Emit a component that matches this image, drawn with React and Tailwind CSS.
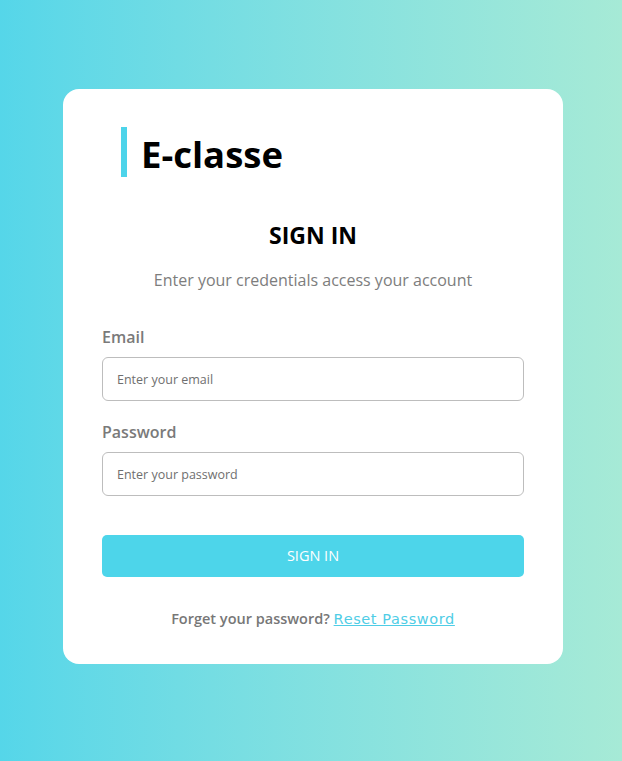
import React, { useState } from 'react';

export default function App() {
  const [form, setForm] = useState({ email: '', password: '' });

  return (
    <div
      className="min-h-[761px] w-full flex justify-start pl-[63px] pt-[89px] bg-gradient-to-r from-[#55d6e9] to-[#a6ead6]"
      style={{ fontFamily: '"Open Sans", "Noto Sans", sans-serif' }}
    >
      <div className="w-[500px] h-[575px] bg-white rounded-[16px] px-[39px] pt-[38px]">
        <div className="flex items-center ml-[19px] h-[50px]">
          <div className="w-[6px] h-[50px] bg-[#4dd4ea]" />
          <h1 className="ml-[14px] mt-[5px] text-[36.5px] font-bold text-black leading-none">E-classe</h1>
        </div>

        <h2 className="mt-[42px] text-center text-[23px] font-bold text-black leading-[32px]">SIGN IN</h2>
        <p className="mt-[17px] text-center text-[16px] text-[#7d7d7d] leading-[24px]">
          Enter your credentials access your account
        </p>

        <form onSubmit={e => e.preventDefault()} className="mt-[33px]">
          <label className="block text-[16px] font-semibold text-[#7a7a7a] leading-[24px]">Email</label>
          <input
            value={form.email}
            onChange={e => setForm({ ...form, email: e.target.value })}
            placeholder="Enter your email"
            className="mt-[8px] w-full h-[44px] px-[14px] border border-[#bdbdbd] rounded-[6px] text-[12.5px] placeholder:text-[#6f6f6f] outline-none"
          />
          <label className="block mt-[19px] text-[16px] font-semibold text-[#7a7a7a] leading-[24px]">Password</label>
          <input
            type="password"
            value={form.password}
            onChange={e => setForm({ ...form, password: e.target.value })}
            placeholder="Enter your password"
            className="mt-[8px] w-full h-[44px] px-[14px] border border-[#bdbdbd] rounded-[6px] text-[12.5px] placeholder:text-[#6f6f6f] outline-none"
          />
          <button
            type="submit"
            className="mt-[39px] w-full h-[42px] bg-[#4dd5ea] text-white text-[14.5px] rounded-[5px]"
          >
            SIGN IN
          </button>
        </form>

        <p className="mt-[31px] text-center text-[14.5px] font-semibold text-[#777777]">
          Forget your password?{' '}
          <a href="#" className="font-normal text-[#4fcde6] underline tracking-[0.6px]" style={{ fontFamily: '"DejaVu Sans", sans-serif' }}>
            Reset Password
          </a>
        </p>
      </div>
    </div>
  );
}
